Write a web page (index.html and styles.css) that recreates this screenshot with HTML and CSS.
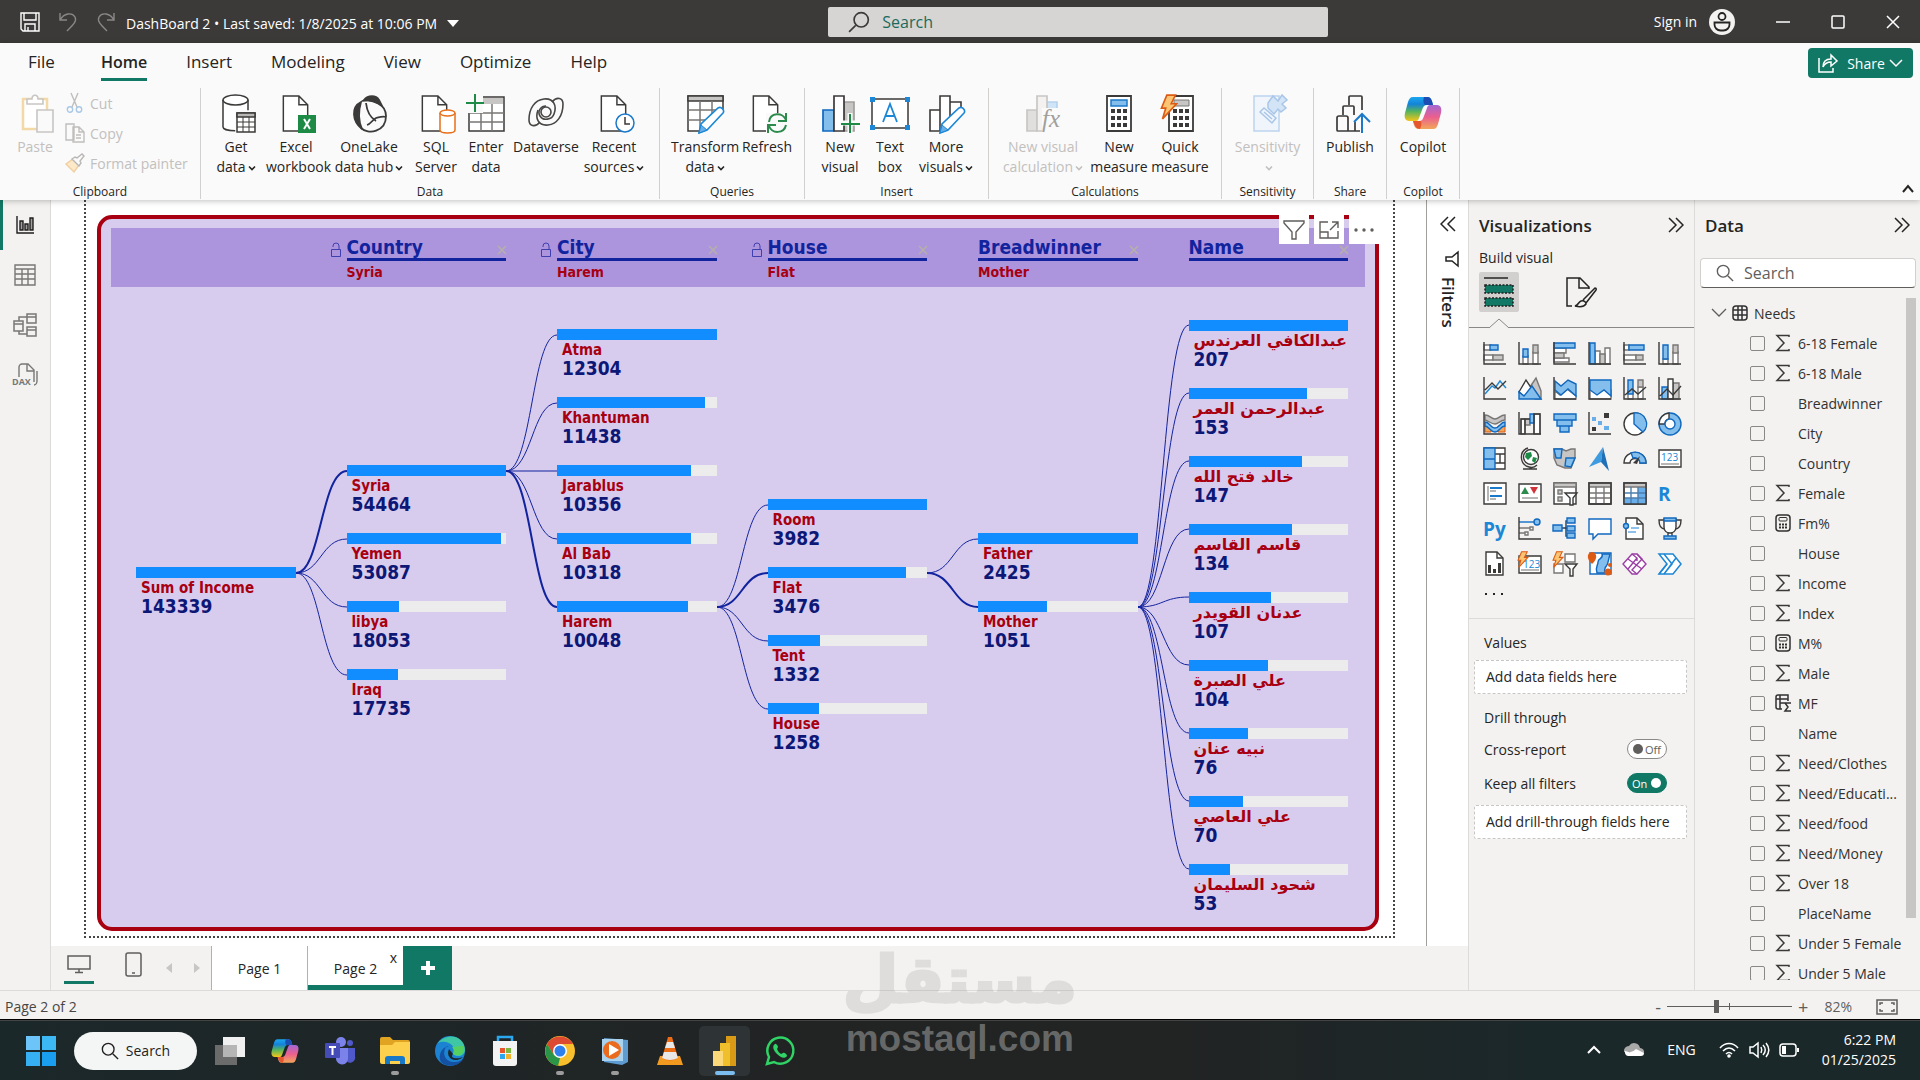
FILE: index.html
```html
<!DOCTYPE html>
<html lang="en">
<head>
<meta charset="UTF-8">
<meta name="viewport" content="width=device-width, initial-scale=1.0">
<title>DashBoard 2</title>
<link rel="stylesheet" href="styles.css">
</head>
<body>

<svg class="sprite" aria-hidden="true">
  <linearGradient id="cp-a" x1="0" y1="0" x2="0" y2="1"><stop offset="0" stop-color="#1aa7f0"/><stop offset=".3" stop-color="#1483d8"/><stop offset=".6" stop-color="#55b45c"/><stop offset="1" stop-color="#f5c518"/></linearGradient>
  <linearGradient id="cp-b" x1="0" y1="0" x2="0" y2="1"><stop offset="0" stop-color="#a267d4"/><stop offset=".5" stop-color="#ea5f8e"/><stop offset="1" stop-color="#f2a65a"/></linearGradient>
  <symbol id="sigma" viewBox="0 0 16 18"><path d="M14 3V1.500H2L9 9L2 16.500H14V15" fill="none" stroke="#3b3a39" stroke-width="1.500"/></symbol>
  <symbol id="calc" viewBox="0 0 16 18"><rect x="1" y="1" width="14" height="16" rx="3" fill="none" stroke="#323130" stroke-width="1.500"/><rect x="4" y="3.500" width="8" height="3.500" rx="1" fill="none" stroke="#323130"/><path d="M4 10.500h2m1 0h2m1 0h2M4 13.500h2m1 0h2m1 0h2" stroke="#323130" stroke-width="2"/></symbol>
  <symbol id="left2" viewBox="0 0 16 16"><path d="M8 1L1 8l7 7M15 1L8 8l7 7" fill="none" stroke="#252423" stroke-width="1.500"/></symbol>
  <symbol id="right2" viewBox="0 0 16 16"><path d="M1 1l7 7l-7 7M8 1l7 7l-7 7" fill="none" stroke="#252423" stroke-width="1.500"/></symbol>
  <symbol id="down" viewBox="0 0 8 8"><path d="M1 2.500l3 3l3-3" fill="none" stroke="currentColor" stroke-width="1.600"/></symbol>
  <symbol id="lens" viewBox="0 0 20 20"><circle cx="8" cy="8" r="6.500" fill="none" stroke="currentColor" stroke-width="1.500"/><path d="M13 13l6 6" stroke="currentColor" stroke-width="1.500"/></symbol>
  <symbol id="lock" viewBox="0 0 12 16"><path d="M1.500 7.500h9v7h-9zM3 5V4a3 3 0 0 1 6 0v3.500" fill="none" stroke="#3f3fae"/></symbol>
  <symbol id="page" viewBox="0 0 28 38"><path d="M1 1h16l9 9v27H1zM17 1v9h9" fill="#fff" stroke="#3b3a39" stroke-width="1.500"/></symbol>
  <symbol id="bolt" viewBox="0 0 16 24"><path d="M6 1h8l-4 8h5L2 23l3-10H1z" fill="#fcc573" stroke="#dc5b14" stroke-width="1.500"/></symbol>
  <symbol id="copilot" viewBox="0 0 38 34"><path d="M9 1h14c4 0 5 3 6 8h-6c-3 0-4 2-5 5l-3 8c-1 3-2 3-4 3H5c-4 0-5-4-4-8L4 6c1-3 2-5 5-5z" fill="url(#cp-a)"/><path d="M29 33H15c-4 0-5-3-6-8h6c3 0 4-2 5-5l3-8c1-3 2-3 4-3h6c4 0 5 4 4 8l-3 11c-1 3-2 5-5 5z" fill="url(#cp-b)"/><path d="M20 1h4c3 0 4 4 5 8h-8c-2-2-2-5-1-8z" fill="#1b4db3"/><path d="M9 25h8c1 3 0 6-1 8c-4 0-5-3-7-8z" fill="#e4572e"/></symbol>
  <symbol id="pencil" viewBox="0 0 28 28"><path d="M1 27l2-9L20 2c3-2 7 2 5 5L9 24z" fill="#fff" stroke="#1c87d6" stroke-width="1.600"/><path d="M1 27l2-8l6 5z" fill="#69aee8" stroke="#1c87d6"/></symbol>
</svg>

<header class="titlebar">
  <div class="quick">
    <button aria-label="Save"><svg width="20" height="20" viewBox="0 0 20 20" fill="none" stroke="#fff" stroke-width="1.400"><path d="M1 1h18v18H3l-2-2zM4 1v7h12V1M5 19v-7h10v7M8 19v-4"/></svg></button>
    <button aria-label="Undo"><svg width="20" height="20" viewBox="0 0 20 20" fill="none" stroke="#8a8886" stroke-width="1.400"><path d="M2 1v7h7M2 8c4-7 12-8 15-3c2 4-1 7-8 14"/></svg></button>
    <button aria-label="Redo"><svg width="20" height="20" viewBox="0 0 20 20" fill="none" stroke="#8a8886" stroke-width="1.400"><path d="M18 1v7h-7M18 8C14 1 6 0 3 5c-2 4 1 7 8 14"/></svg></button>
  </div>
  <button class="file-name">DashBoard 2 • Last saved: 1/8/2025 at 10:06 PM <svg width="12" height="7" viewBox="0 0 12 7"><path d="M0 0h12L6 7z" fill="#fff"/></svg></button>
  <label class="top-search"><svg width="22" height="22" viewBox="0 0 20 20"><g transform="translate(20) scale(-1 1)"><use href="#lens" width="20" height="20"/></g></svg><input type="text" placeholder="Search" aria-label="Search"></label>
  <div class="window">
    <a class="sign-in" href="#">Sign in <svg width="26" height="26" viewBox="0 0 26 26"><circle cx="13" cy="13" r="13" fill="#f3f2f1"/><circle cx="13" cy="7.500" r="3.500" fill="none" stroke="#252423" stroke-width="1.800"/><path d="M5.500 13.500h15v2a6 6 0 0 1-6 6h-3a6 6 0 0 1-6-6z" fill="none" stroke="#252423" stroke-width="1.800"/></svg></a>
    <button aria-label="Minimize"><svg width="14" height="14" viewBox="0 0 14 14"><path d="M0 7h14" stroke="#fff" stroke-width="1.500"/></svg></button>
    <button aria-label="Maximize"><svg width="14" height="14" viewBox="0 0 14 14"><rect x="1" y="1" width="12" height="12" rx="1" fill="none" stroke="#fff" stroke-width="1.500"/></svg></button>
    <button aria-label="Close"><svg width="14" height="14" viewBox="0 0 14 14"><path d="M1 1l12 12M13 1L1 13" stroke="#fff" stroke-width="1.500"/></svg></button>
  </div>
</header>

<section class="ribbon">
  <nav class="tabs">
    <a href="#">File</a>
    <a href="#" class="active">Home</a>
    <a href="#">Insert</a>
    <a href="#">Modeling</a>
    <a href="#">View</a>
    <a href="#">Optimize</a>
    <a href="#">Help</a>
    <button class="share"><svg width="20" height="20" viewBox="0 0 20 20" fill="none" stroke="#fff" stroke-width="1.500"><path d="M1 5v14h14v-4M5 14c0-6 3-8 8-8V2l6 6l-6 5V9c-4 0-6 1-8 5z"/></svg>Share<svg width="14" height="14" viewBox="0 0 14 14"><path d="M1 4l6 6l6-6" fill="none" stroke="#fff" stroke-width="1.500"/></svg></button>
  </nav>
  <div class="groups">
    <div class="group clipboard">
      <div class="tools">
        <button class="tool" disabled><svg width="40" height="40" viewBox="0 0 40 40" fill="#fff" stroke="#c8c6c4" stroke-width="1.600"><path d="M8 5h24v30H8z" stroke="#f3d9a8" stroke-width="2.500"/><path d="M12 10V5h5c0-5 6-5 6 0h5v5z"/><path d="M22 16h16v22H22z" fill="#fafafa"/></svg>Paste</button>
        <div class="small-tools">
          <button disabled><svg width="20" height="20" viewBox="0 0 20 20" fill="none" stroke="#c0bebc" stroke-width="1.400"><path d="M6 0l6 14M13 0L7 14"/><circle cx="5" cy="16.500" r="2.700" stroke="#a9c8e6"/><circle cx="14" cy="16.500" r="2.700" stroke="#a9c8e6"/></svg>Cut</button>
          <button disabled><svg width="20" height="20" viewBox="0 0 20 20" fill="#fafafa" stroke="#c0bebc" stroke-width="1.400"><path d="M1 1h8v16H1zM8 4h6l5 5v10H8zM14 4v5h5M11 12h5M11 15h5"/></svg>Copy</button>
          <button disabled><svg width="20" height="20" viewBox="0 0 20 20" stroke-width="1.400"><path d="M1 11l7-5l6 6l-5 7z" fill="#fde8c8" stroke="#f0cfa0"/><path d="M7 6l7 7l2-3l-1-2l4-5l-2-2l-5 4l-2-1z" fill="#fafafa" stroke="#b9b7b5"/></svg>Format painter</button>
        </div>
      </div>
      <p>Clipboard</p>
    </div>
    <div class="group data">
      <div class="tools">
        <button class="tool"><svg width="40" height="40" viewBox="0 0 40 40" fill="#fff" stroke="#3b3a39" stroke-width="1.500"><path d="M7 6v27c0 5 25 5 25 0V6"/><ellipse cx="19.500" cy="6" rx="12.500" ry="5"/><path d="M20 17h20v22H20z" stroke="#fafafa"/><path d="M21 19h18v19H21z"/><path d="M21 19h18v4H21z" fill="#b9b7b5"/><path d="M21 28h18M21 33h18M27 23v15M33 23v15" stroke-width="1"/></svg>Get<br>data<svg class="dd" width="8" height="8"><use href="#down"/></svg></button>
        <button class="tool"><svg width="40" height="40" viewBox="0 0 40 40"><use href="#page" x="6" y="1" width="28" height="37"/><path d="M22 21h18v18H22z" fill="#1d8a45"/><path d="M28 25l6 10M34 25l-6 10" stroke="#fff" stroke-width="2"/></svg>Excel<br>workbook</button>
        <button class="tool"><svg width="40" height="40" viewBox="0 0 40 40" fill="none" stroke="#3b3a39" stroke-width="1.800"><path d="M15 6c4-5 12-5 15 0l3 6c-5-4-11-6-18-6z" fill="#3b3a39"/><path d="M12 8C2 13 3 27 13 35c-4-9-4-17-1-27z" fill="#3b3a39"/><path d="M13 7c12-3 24 4 24 15c0 16-18 19-25 12M17 9c1 9 5 15 10 18M18 31c4-1 5-5 9-7c4-1 7-2 10-1"/></svg>OneLake<br>data hub<svg class="dd" width="8" height="8"><use href="#down"/></svg></button>
        <button class="tool"><svg width="40" height="40" viewBox="0 0 40 40"><use href="#page" x="5" y="1" width="28" height="37"/><g fill="#fff" stroke="#e8701a" stroke-width="1.500"><path d="M24 19v17c0 4 15 4 15 0V19"/><ellipse cx="31.500" cy="19" rx="7.500" ry="3"/></g></svg>SQL<br>Server</button>
        <button class="tool"><svg width="40" height="40" viewBox="0 0 40 40" fill="#fff" stroke="#3b3a39" stroke-width="1.500"><path d="M3 3h35v34H3z"/><path d="M4 4h33v6H4z" fill="#c8c6c4" stroke="none"/><path d="M3 19h35M3 28h35M15 10v27M26 10v27" stroke="#797775"/><path d="M0 0h17v19H0z" fill="#fafafa" stroke="none"/><path d="M0 9h18M9 0v18" stroke="#1d8a45" stroke-width="2"/></svg>Enter<br>data</button>
        <button class="tool"><svg width="40" height="40" viewBox="0 0 40 40" fill="none" stroke="#484644" stroke-width="1.600"><path id="leaf" d="M14 28C9 34 3 32 3 26C3 14 9 6 18 5C28 4 31 12 28 20C26 26 17 27 14 22C11 17 15 12 20 12"/><path d="M26 8C31 2 37 4 37 10C37 22 31 30 22 31C12 32 9 24 12 16"/><circle cx="20" cy="18" r="5"/></svg>Dataverse</button>
        <button class="tool"><svg width="40" height="40" viewBox="0 0 40 40"><use href="#page" x="6" y="1" width="28" height="37"/><circle cx="31" cy="29" r="9" fill="#fff" stroke="#1c79c9" stroke-width="1.500"/><path d="M31 23v7h5" fill="none" stroke="#3b3a39" stroke-width="1.500"/></svg>Recent<br>sources<svg class="dd" width="8" height="8"><use href="#down"/></svg></button>
      </div>
      <p>Data</p>
    </div>
    <div class="group queries">
      <div class="tools">
        <button class="tool"><svg width="40" height="40" viewBox="0 0 40 40"><g fill="#fff" stroke="#3b3a39" stroke-width="1.500"><path d="M3 2h35v35H3z"/><path d="M3 2h35v5H3z" fill="#c8c6c4"/><path d="M3 16h35M3 26h35M15 7v30M27 7v30" stroke="#797775"/></g><path d="M14 40L40 14v26z" fill="#fafafa"/><use href="#pencil" x="13" y="12" width="28" height="28"/></svg>Transform<br>data<svg class="dd" width="8" height="8"><use href="#down"/></svg></button>
        <button class="tool"><svg width="40" height="40" viewBox="0 0 40 40"><use href="#page" x="5" y="1" width="28" height="37"/><path d="M19 19h21v21H19z" fill="#fafafa"/><path d="M22 28c1-10 14-10 17-2M39 19v8h-8M39 31c-2 9-14 9-17 1M21 39v-8h8" fill="none" stroke="#2b8a4c" stroke-width="2"/></svg>Refresh</button>
      </div>
      <p>Queries</p>
    </div>
    <div class="group insert">
      <div class="tools">
        <button class="tool"><svg width="40" height="40" viewBox="0 0 40 40" stroke-width="1.700"><path d="M3 16h11v21H3z" fill="#83beec" stroke="#1068bf"/><path d="M24 8h10v29H24z" fill="#c8c6c4" stroke="#a19f9d"/><path d="M14 2h10v35H14z" fill="#fff" stroke="#3b3a39"/><path d="M20 29h20M30 19v20" stroke="#fafafa" stroke-width="5"/><path d="M21 30h19M30 20v19" stroke="#1d8a45" stroke-width="2"/></svg>New<br>visual</button>
        <button class="tool"><svg width="40" height="40" viewBox="0 0 40 40"><path d="M2 5h36v29H2z" fill="#fff" stroke="#3b3a39" stroke-width="1.500"/><path d="M0 3h5v5H0zM35 3h5v5h-5zM0 31h5v5H0zM35 31h5v5h-5z" fill="#1c87d6"/><path d="M13 28l7-18l7 18M16 22h8" fill="none" stroke="#1c87d6" stroke-width="1.800"/></svg>Text<br>box</button>
        <button class="tool"><svg width="40" height="40" viewBox="0 0 40 40"><g fill="#fff" stroke="#3b3a39" stroke-width="1.600"><path d="M4 16h10v21H4zM24 8h11v29H24zM14 2h10v35H14z"/></g><path d="M15 38L40 12v28z" fill="#fafafa"/><use href="#pencil" x="13" y="12" width="28" height="28"/></svg>More<br>visuals<svg class="dd" width="8" height="8"><use href="#down"/></svg></button>
      </div>
      <p>Insert</p>
    </div>
    <div class="group calculations">
      <div class="tools">
        <button class="tool" disabled><svg width="40" height="40" viewBox="0 0 40 40" stroke="#c8c6c4" stroke-width="1.700" fill="#f3f2f1"><path d="M4 16h10v21H4z" fill="#e1dfdd"/><path d="M24 8h10v8H24z" fill="#cfe4f7" stroke="#b5d3ee"/><path d="M14 2h10v35H14z"/><path d="M19 14h21v26H19z" fill="#fafafa" stroke="none"/><text x="19" y="33" font-family="Liberation Serif, serif" font-style="italic" font-size="25" fill="#a19f9d" stroke="none">fx</text></svg>New visual<br>calculation<svg class="dd" width="8" height="8"><use href="#down"/></svg></button>
        <button class="tool"><svg width="40" height="40" viewBox="0 0 40 40"><path d="M8 2h24v35H8z" fill="#fff" stroke="#3b3a39" stroke-width="1.800"/><path d="M12 6h16v6H12z" fill="#83beec" stroke="#1c79c9" stroke-width="1.500"/><path d="M12 17h17M12 24h17M12 31h17" stroke="#3b3a39" stroke-width="4" stroke-dasharray="4 2"/></svg>New<br>measure</button>
        <button class="tool"><svg width="40" height="40" viewBox="0 0 40 40"><path d="M9 2h24v35H9z" fill="#fff" stroke="#3b3a39" stroke-width="1.800"/><path d="M14 6h15v6H14z" fill="#c8c6c4" stroke="#797775"/><path d="M13 17h17M13 24h17M13 31h17" stroke="#3b3a39" stroke-width="4" stroke-dasharray="4 2"/><use href="#bolt" x="0" y="0" width="18" height="26"/></svg>Quick<br>measure</button>
      </div>
      <p>Calculations</p>
    </div>
    <div class="group sensitivity">
      <div class="tools">
        <button class="tool" disabled><svg width="40" height="40" viewBox="0 0 40 40" fill="#f0f5fb" stroke="#a9c6e8" stroke-width="1.500"><path d="M6 2h25v35H6z" stroke="#bcd3ee"/><path d="M12 18l4-4l12 10l-4 5zM16 18l8 7"/><path d="M20 9l5-7l5 5l4-6l5 5l-5 4l4 4l-5 4l-3-3l-4 5l-6-6z" fill="#d3e4f6"/></svg>Sensitivity<br><svg class="dd" width="8" height="8"><use href="#down"/></svg></button>
      </div>
      <p>Sensitivity</p>
    </div>
    <div class="group publish">
      <div class="tools">
        <button class="tool"><svg width="40" height="40" viewBox="0 0 40 40" fill="none" stroke="#3b3a39" stroke-width="1.700"><path d="M30 37H8a1 1 0 0 1-1-1V24a2 2 0 0 1 2-2h7a2 2 0 0 1 2 2v13M13 21v-8a1 1 0 0 1 1-1h9a1 1 0 0 1 1 1v8M19 11V3a1 1 0 0 1 1-1h11a1 1 0 0 1 1 1v13M25 28v9"/><path d="M32 39V21M24 28l8-8l8 8" stroke="#1c79c9" stroke-width="2"/></svg>Publish</button>
      </div>
      <p>Share</p>
    </div>
    <div class="group copilot">
      <div class="tools">
        <button class="tool"><svg width="40" height="40" viewBox="0 0 40 40"><use href="#copilot" x="1" y="2" width="38" height="34"/></svg>Copilot</button>
      </div>
      <p>Copilot</p>
    </div>
    <button class="collapse" aria-label="Collapse ribbon"><svg width="12" height="10" viewBox="0 0 12 10"><path d="M1 8l5-6l5 6" fill="none" stroke="#252423" stroke-width="2"/></svg></button>
  </div>
</section>

<main class="workspace">
  <nav class="rail">
    <button class="active" aria-label="Report view"><svg width="20" height="20" viewBox="0 0 20 20" fill="#a19f9d" stroke="#201f1e" stroke-width="1.400"><path d="M2 1v17h17" fill="none"/><path d="M5 6h3v9H5zM10 9h3v6h-3zM15 3h3v12h-3z"/></svg></button>
    <button aria-label="Table view"><svg width="22" height="22" viewBox="0 0 22 22" fill="none" stroke="#797775" stroke-width="1.400"><path d="M1 1h20v20H1zM1 5h20M1 10h20M1 15h20M8 5v16M14 5v16"/></svg></button>
    <button aria-label="Model view"><svg width="24" height="24" viewBox="0 0 24 24" fill="none" stroke="#797775" stroke-width="1.500"><path d="M1 8h9v10H1zM1 11h9M14 1h9v9h-9zM14 4h9M14 14h9v9h-9zM14 17h9M6 8V4h8M6 18v3h8"/></svg></button>
    <button aria-label="DAX query view"><svg width="26" height="24" viewBox="0 0 26 24" fill="none" stroke="#797775" stroke-width="1.400"><path d="M7 14V4a3 3 0 0 1 3-3h6l6 6v12M15 1v7h7M25 8v10c0 3-2 4-3 4"/><text x="0" y="22" font-family="Open Sans, sans-serif" font-weight="700" font-size="9" fill="#797775" stroke="none">DAX</text></svg></button>
  </nav>

  <section class="center">
    <div class="stage">
      <div class="canvas">
        <div class="sheet">
          <article class="visual">
            <div class="visual-tools">
              <button aria-label="Filters"><svg width="22" height="20" viewBox="0 0 22 20"><path d="M1 1h20v2l-8 9v7H9v-7L1 3z" fill="none" stroke="#605e5c" stroke-width="1.400"/></svg></button>
              <button aria-label="Focus mode"><svg width="20" height="18" viewBox="0 0 20 18" fill="none" stroke="#605e5c" stroke-width="1.400"><path d="M9 1H1v16h18v-7M1 11h8v6M13 1h6v6M19 1l-8 8"/></svg></button>
              <button aria-label="More options"><svg width="20" height="4" viewBox="0 0 20 4" fill="#605e5c"><circle cx="2" cy="2" r="1.700"/><circle cx="10" cy="2" r="1.700"/><circle cx="18" cy="2" r="1.700"/></svg></button>
            </div>
            <div class="levels-head">
              <div></div>
              <div class="head"><svg class="lock" width="12" height="16"><use href="#lock"/></svg><h3>Country</h3><button aria-label="Remove Country"><svg width="8" height="8" viewBox="0 0 8 8"><path d="M0 0l8 8M8 0L0 8"/></svg></button><p>Syria</p></div>
              <div class="head"><svg class="lock" width="12" height="16"><use href="#lock"/></svg><h3>City</h3><button aria-label="Remove City"><svg width="8" height="8" viewBox="0 0 8 8"><path d="M0 0l8 8M8 0L0 8"/></svg></button><p>Harem</p></div>
              <div class="head"><svg class="lock" width="12" height="16"><use href="#lock"/></svg><h3>House</h3><button aria-label="Remove House"><svg width="8" height="8" viewBox="0 0 8 8"><path d="M0 0l8 8M8 0L0 8"/></svg></button><p>Flat</p></div>
              <div class="head"><h3>Breadwinner</h3><button aria-label="Remove Breadwinner"><svg width="8" height="8" viewBox="0 0 8 8"><path d="M0 0l8 8M8 0L0 8"/></svg></button><p>Mother</p></div>
              <div class="head"><h3>Name</h3><button aria-label="Remove Name"><svg width="8" height="8" viewBox="0 0 8 8"><path d="M0 0l8 8M8 0L0 8"/></svg></button></div>
            </div>
            <div class="tree">
              <svg class="links" viewBox="0 0 1212 636" preserveAspectRatio="none">
                <path class="on" d="M160 286C185 286 185 184 211 184"/>
                <path d="M160 286C185 286 185 252 211 252M160 286C185 286 185 320 211 320M160 286C185 286 185 388 211 388"/>
                <path class="on" d="M370 184C396 184 396 320 421 320"/>
                <path d="M370 184H421M370 184C396 184 396 48 421 48M370 184C396 184 396 116 421 116M370 184C396 184 396 252 421 252"/>
                <path class="on" d="M581 320C606 320 606 286 632 286"/>
                <path d="M581 320C606 320 606 218 632 218M581 320C606 320 606 354 632 354M581 320C606 320 606 422 632 422"/>
                <path class="on" d="M791 286C817 286 817 320 842 320"/>
                <path d="M791 286C817 286 817 252 842 252"/>
                <path d="M1002 320C1027 320 1027 38 1053 38M1002 320C1027 320 1027 106 1053 106M1002 320C1027 320 1027 174 1053 174M1002 320C1027 320 1027 242 1053 242M1002 320C1027 320 1027 310 1053 310M1002 320C1027 320 1027 378 1053 378M1002 320C1027 320 1027 446 1053 446M1002 320C1027 320 1027 514 1053 514M1002 320C1027 320 1027 582 1053 582"/>
              </svg>
              <ul class="level root">
                <li><i class="bar"><b style="width:100%"></b></i><span>Sum of Income</span><strong>143339</strong></li>
              </ul>
              <ul class="level country">
                <li><i class="bar"><b style="width:100%"></b></i><span>Syria</span><strong>54464</strong></li>
                <li><i class="bar"><b style="width:97%"></b></i><span>Yemen</span><strong>53087</strong></li>
                <li><i class="bar"><b style="width:33%"></b></i><span>libya</span><strong>18053</strong></li>
                <li><i class="bar"><b style="width:32%"></b></i><span>Iraq</span><strong>17735</strong></li>
              </ul>
              <ul class="level city">
                <li><i class="bar"><b style="width:100%"></b></i><span>Atma</span><strong>12304</strong></li>
                <li><i class="bar"><b style="width:93%"></b></i><span>Khantuman</span><strong>11438</strong></li>
                <li><i class="bar"><b style="width:84%"></b></i><span>Jarablus</span><strong>10356</strong></li>
                <li><i class="bar"><b style="width:84%"></b></i><span>Al Bab</span><strong>10318</strong></li>
                <li><i class="bar"><b style="width:82%"></b></i><span>Harem</span><strong>10048</strong></li>
              </ul>
              <ul class="level house">
                <li><i class="bar"><b style="width:100%"></b></i><span>Room</span><strong>3982</strong></li>
                <li><i class="bar"><b style="width:87%"></b></i><span>Flat</span><strong>3476</strong></li>
                <li><i class="bar"><b style="width:33%"></b></i><span>Tent</span><strong>1332</strong></li>
                <li><i class="bar"><b style="width:32%"></b></i><span>House</span><strong>1258</strong></li>
              </ul>
              <ul class="level breadwinner">
                <li><i class="bar"><b style="width:100%"></b></i><span>Father</span><strong>2425</strong></li>
                <li><i class="bar"><b style="width:43%"></b></i><span>Mother</span><strong>1051</strong></li>
              </ul>
              <ul class="level name">
                <li><i class="bar"><b style="width:100%"></b></i><span lang="ar">عبدالكافي العرندس</span><strong>207</strong></li>
                <li><i class="bar"><b style="width:74%"></b></i><span lang="ar">عبدالرحمن العمر</span><strong>153</strong></li>
                <li><i class="bar"><b style="width:71%"></b></i><span lang="ar">خالد فتح الله</span><strong>147</strong></li>
                <li><i class="bar"><b style="width:65%"></b></i><span lang="ar">قاسم القاسم</span><strong>134</strong></li>
                <li><i class="bar"><b style="width:52%"></b></i><span lang="ar">عدنان القويدر</span><strong>107</strong></li>
                <li><i class="bar"><b style="width:50%"></b></i><span lang="ar">علي الصبرة</span><strong>104</strong></li>
                <li><i class="bar"><b style="width:37%"></b></i><span lang="ar">نبيه عنان</span><strong>76</strong></li>
                <li><i class="bar"><b style="width:34%"></b></i><span lang="ar">علي العاصي</span><strong>70</strong></li>
                <li><i class="bar"><b style="width:26%"></b></i><span lang="ar">شحود السليمان</span><strong>53</strong></li>
              </ul>
            </div>
          </article>
        </div>
      </div>
      <aside class="filters">
        <button aria-label="Expand filters"><svg width="16" height="16"><use href="#left2"/></svg></button>
        <svg width="14" height="16" viewBox="0 0 14 16"><path d="M13 1v14L7 10H1V6h6z" fill="none" stroke="#252423" stroke-width="1.500"/></svg>
        <h2>Filters</h2>
      </aside>
    </div>
    <div class="pages">
      <button class="layout active" aria-label="Desktop layout"><svg width="26" height="20" viewBox="0 0 26 20" fill="none" stroke="#605e5c" stroke-width="1.500"><path d="M2 2h22v13H2zM13 15v3M9 18.500h8"/></svg></button>
      <button class="layout" aria-label="Mobile layout"><svg width="18" height="26" viewBox="0 0 18 26" fill="none" stroke="#605e5c" stroke-width="1.500"><rect x="1" y="1" width="15" height="23" rx="2"/><path d="M7 21h3"/></svg></button>
      <button class="step" aria-label="Previous page"><svg width="6" height="10" viewBox="0 0 6 10"><path d="M6 0v10L0 5z" fill="#c8c6c4"/></svg></button>
      <button class="step" aria-label="Next page"><svg width="6" height="10" viewBox="0 0 6 10"><path d="M0 0v10l6-5z" fill="#c8c6c4"/></svg></button>
      <button class="page-tab">Page 1</button>
      <button class="page-tab active">Page 2<span>x</span></button>
      <button class="add-page" aria-label="New page"><svg width="14" height="14" viewBox="0 0 14 14"><path d="M7 0v14M0 7h14" stroke="#fff" stroke-width="4"/></svg></button>
    </div>
  </section>

  <aside class="pane visualizations">
    <header><h2>Visualizations</h2><button aria-label="Collapse"><svg width="16" height="16"><use href="#right2"/></svg></button></header>
    <h3>Build visual</h3>
    <div class="modes">
      <button class="active" aria-label="Build"><svg width="32" height="32" viewBox="0 0 32 32"><path d="M1 2h24" stroke="#252423" stroke-width="1.500"/><path d="M2 9h28v8H2zM2 22h28v8H2z" fill="#117865" stroke="#201f1e" stroke-width="1.500" stroke-dasharray="2 1.500"/></svg></button>
      <button aria-label="Format"><svg width="32" height="32" viewBox="0 0 32 32" fill="none" stroke="#252423" stroke-width="1.500"><path d="M6 30H1V2h13l9 9v2M13 2v10h10M15 25c3-1 5 1 5 3c-2 3-7 3-11 2c4-1 3-4 6-5zM17 24l12-12c2 0 1 2 1 2L20 27"/></svg></button>
    </div>
    <svg class="pointer" viewBox="0 0 20 10" width="20" height="10"><path d="M0 10L10 1l10 9" fill="#f3f2f1" stroke="#8a8886"/></svg>
    <div class="gallery">
      <button aria-label="Stacked bar chart"><svg viewBox="0 0 24 24"><path class="w" d="M1 3h7v5H1zM1 13h9v5H1z"/><path class="b" d="M7 3h8v5H7z"/><path class="g" d="M10 13h10v5H10z"/><path class="k" d="M1 0v22h22"/></svg></button>
      <button aria-label="Stacked column chart"><svg viewBox="0 0 24 24"><path class="w" d="M5 14h5v8H5zM15 10h5v12h-5z"/><path class="b" d="M5 7h5v8H5z"/><path class="g" d="M15 3h5v8h-5z"/><path class="k" d="M1 0v22h22"/></svg></button>
      <button aria-label="Clustered bar chart"><svg viewBox="0 0 24 24"><path class="w" d="M1 6h12v5H1zM1 16h15v4H1z"/><path class="g" d="M1 11h10v5H1z"/><path class="b" d="M1 1h21v5H1z"/><path class="k" d="M1 0v22h22"/></svg></button>
      <button aria-label="Clustered column chart"><svg viewBox="0 0 24 24"><path class="w" d="M7 9h5v13H7zM17 6h5v16h-5z"/><path class="g" d="M12 12h5v10h-5z"/><path class="b" d="M2 1h5v21H2z"/><path class="k" d="M1 0v22h22"/></svg></button>
      <button aria-label="100% stacked bar chart"><svg viewBox="0 0 24 24"><path class="w" d="M1 3h5v5H1zM1 13h12v5H1z"/><path class="b" d="M6 3h15v5H6z"/><path class="g" d="M13 13h7v5h-7z"/><path class="k" d="M1 0v22h22"/></svg></button>
      <button aria-label="100% stacked column chart"><svg viewBox="0 0 24 24"><path class="w" d="M5 17h5v5H5zM15 10h5v12h-5z"/><path class="b" d="M5 3h5v14H5z"/><path class="g" d="M15 3h5v8h-5z"/><path class="k" d="M1 0v22h22"/></svg></button>
      <button aria-label="Line chart"><svg viewBox="0 0 24 24"><path d="M2 17L9 9l3 2l5-7l6 7" fill="none" stroke="#1c87d6" stroke-width="1.400"/><path class="k" d="M1 0v22h22M2 13l7-7l6 6l8-8"/></svg></button>
      <button aria-label="Area chart"><svg viewBox="0 0 24 24"><path class="g" d="M12 10l6-9l5 13v8h-6z"/><path class="w dark" d="M1 15L8 3l8 12l-8 6z"/><path class="b" d="M1 22v-7l5 4l8-10l9 13z"/></svg></button>
      <button aria-label="Stacked area chart"><svg viewBox="0 0 24 24"><path class="w" d="M2 14l5 4l7-6l9 7v3H2z"/><path class="b" d="M2 4l6 5l7-6l8 4v12l-8-7l-7 6l-6-5z"/><path class="k" d="M1 0v22h22"/></svg></button>
      <button aria-label="100% stacked area chart"><svg viewBox="0 0 24 24"><path class="w" d="M2 13h21v9H2z"/><path class="b" d="M2 3h21v16l-7-6l-7 5l-7-5z"/><path class="k" d="M1 0v22h22"/></svg></button>
      <button aria-label="Line and stacked column chart"><svg viewBox="0 0 24 24"><path class="w" d="M5 14h5v8H5zM15 10h5v12h-5z"/><path class="b" d="M5 3h5v14H5z"/><path class="g" d="M15 3h5v7h-5z"/><path class="k" d="M1 0v22h22M2 18l7-6l6 5l8-7"/></svg></button>
      <button aria-label="Line and clustered column chart"><svg viewBox="0 0 24 24"><path class="b" d="M4 10h6v12H4z"/><path class="g" d="M15 6h6v16h-6z"/><path class="w dark" d="M10 2h5v20h-5z"/><path class="k" d="M1 0v22h22M2 19l7-7l6 6l8-9"/></svg></button>
      <button aria-label="Ribbon chart"><svg viewBox="0 0 24 24"><path d="M2 14h6v6H2zM15 14h7v6h-7z" fill="#f2a65a" stroke="#dc5b14"/><path class="g" d="M2 3c5 0 6 4 10 4s5-4 10-4v5c-5 0-6 4-10 4S6 9 2 8z"/><path class="b" d="M2 10c5 0 5 6 10 6s5-6 10-6v4c-5 0-5 6-10 6s-6-6-10-6z"/><path class="k" d="M1 0v22h22"/></svg></button>
      <button aria-label="Waterfall chart"><svg viewBox="0 0 24 24"><path class="w" d="M3 7h4v15H3zM16 2h6v20h-6z"/><path class="g" d="M7 7h5v6H7z"/><path class="b" d="M12 2h4v9h-4z"/><path class="k" d="M1 0v22h22M3 22V7h9M16 22V2h6v20M7 7v15"/></svg></button>
      <button aria-label="Funnel chart"><svg viewBox="0 0 24 24"><path class="b" d="M1 2h22v6H1zM4 8h15v6H4zM7 14h9v6H7z"/></svg></button>
      <button aria-label="Scatter chart"><svg viewBox="0 0 24 24"><path d="M16 1h5v5h-5zM4 15h4v4H4z" fill="#3b3a39"/><path d="M4 5h4v4H4zM10 9h4v4h-4zM16 14h5v4h-5z" fill="#69aee8"/><path class="k" d="M1 0v22h22"/></svg></button>
      <button aria-label="Pie chart"><svg viewBox="0 0 24 24"><circle class="w dark" cx="12" cy="12" r="11"/><path class="b" d="M11 1v11l9 8A11 11 0 0 0 11 1z"/></svg></button>
      <button aria-label="Donut chart"><svg viewBox="0 0 24 24"><circle class="b" cx="12" cy="12" r="11"/><path class="w dark" d="M11 1v6a5 5 0 0 0-4 5H1A11 11 0 0 1 11 1z"/><circle class="b hole" cx="12" cy="12" r="5"/></svg></button>
      <button aria-label="Treemap"><svg viewBox="0 0 24 24"><path class="w dark" d="M1 1h21v21H1zM12 7h10M12 16h10M17 7v9"/><path class="b" d="M1 1h11v11H1zM1 12h11v10H1z"/></svg></button>
      <button aria-label="Map"><svg viewBox="0 0 24 24"><circle class="w dark" cx="13" cy="10" r="7.500"/><path d="M8 6l5-1l1 4l-4 4l-3-3zM15 10l4 1l-2 5l-3-2z" fill="#1d8a45"/><path class="k" d="M10 1C1 4 1 17 11 20c3 1 6 0 8-2M12 20v2M5 22h14"/></svg></button>
      <button aria-label="Filled map"><svg viewBox="0 0 24 24"><path class="g" d="M1 2h8l4 2l5-2h4v9l-4 10h-6L4 18L1 11z"/><path class="b" d="M1 2h8l-1 9H3zM13 11h9l-4 9l-6-1z"/></svg></button>
      <button aria-label="Azure map"><svg viewBox="0 0 24 24"><path d="M15 0L1 20l12-5z" fill="#3f9be0"/><path d="M15 0l6 24l-8-9z" fill="#1f6fb8"/></svg></button>
      <button aria-label="Gauge"><svg viewBox="0 0 24 24"><path class="w dark" d="M1 16C1 2 23 2 23 16h-6c0-6-10-6-10 0z"/><path class="b" d="M8 6c8-3 15 3 15 10h-6c0-4-4-6-7-5z"/><path d="M10 16l7-7l-3 8z" fill="#3b3a39"/></svg></button>
      <button aria-label="Card"><svg viewBox="0 0 24 24"><path class="w dark" d="M1 3h22v17H1z"/><path d="M3 17h18" stroke="#a19f9d" stroke-width="1.500"/><text x="3" y="14">123</text></svg></button>
      <button aria-label="Multi-row card"><svg viewBox="0 0 24 24"><path class="w dark" d="M1 1h22v21H1z"/><path d="M5 4v15M7 9h6M7 17h6" stroke="#a19f9d" stroke-width="1.500"/><path d="M7 6h12M7 14h12" stroke="#1c79c9" stroke-width="2"/></svg></button>
      <button aria-label="KPI"><svg viewBox="0 0 24 24"><path class="w dark" d="M1 2h22v18H1z"/><path d="M3 12l4-7l4 7z" fill="#2b8a4c"/><path d="M12 5h8l-4 7z" fill="#d13438"/><path d="M4 16h16" stroke="#a19f9d" stroke-width="1.500"/></svg></button>
      <button aria-label="Slicer"><svg viewBox="0 0 24 24"><path class="w dark" d="M1 1h22v21H1z"/><path class="g" d="M1 1h22v4H1zM5 8h4v4H5zM5 15h4v4H5z"/><path class="w dark" d="M12 11h12l-4 5v7h-3v-7z"/></svg></button>
      <button aria-label="Table"><svg viewBox="0 0 24 24"><path class="w dark" d="M1 1h22v21H1z"/><path class="g" d="M1 1h22v4H1z"/><path d="M1 11h22M1 16h22M8 5v17M16 5v17" stroke="#797775" stroke-width="1.400"/><path class="k" d="M1 1h22v21H1z"/></svg></button>
      <button aria-label="Matrix"><svg viewBox="0 0 24 24"><path class="w dark" d="M1 1h22v21H1z"/><path d="M15 5h8v17H1v-6h14z" fill="#69aee8"/><path class="g" d="M1 1h22v4H1z"/><path d="M1 11h22M1 16h22M8 5v17M15 5v17" stroke="#4b7fae" stroke-width="1.400"/><path class="k" d="M1 1h22v21H1z"/></svg></button>
      <button class="letter">R</button>
      <button class="letter">Py</button>
      <button aria-label="Key influencers"><svg viewBox="0 0 24 24"><path d="M1 5h17" stroke="#1c79c9" stroke-width="1.500"/><path d="M1 11h11M1 16h7" stroke="#797775" stroke-width="1.500"/><circle class="b" cx="19" cy="5" r="3"/><path class="w" d="M12 10h3v3h-3zM7 15h3v3H7z"/><path class="k" d="M1 0v22h22"/></svg></button>
      <button aria-label="Decomposition tree"><svg viewBox="0 0 24 24"><path class="k" d="M9 11h6M16 4h-3v15h3"/><path class="b" d="M0 8h9v6H0zM14 1h8v5h-8zM14 9h8v5h-8zM14 16h8v5h-8z"/></svg></button>
      <button aria-label="Q&amp;A"><svg viewBox="0 0 24 24"><path class="w blue" d="M1 2h22v15H10l-5 5v-5H1z"/></svg></button>
      <button aria-label="Smart narrative"><svg viewBox="0 0 24 24"><path class="w dark" d="M3 1h11l6 6v15H3z"/><path class="k" d="M14 1v6h6"/><circle class="b" cx="3" cy="9" r="2.500"/><path d="M8 11h8M5 15h8" stroke="#69aee8" stroke-width="1.500"/></svg></button>
      <button aria-label="Metrics"><svg viewBox="0 0 24 24"><path class="k" d="M6 3H1c0 7 3 9 6 9M18 3h5c0 7-3 9-6 9"/><path class="w dark" d="M6 2h12v8c0 8-12 8-12 0zM10 16h4v4h-4z"/><path class="b" d="M6 1h12v3H6zM6 19h12v3H6z"/></svg></button>
      <button aria-label="Paginated report"><svg viewBox="0 0 24 24"><path class="w dark" d="M3 0h11l6 6v17H3z"/><path class="k" d="M14 0v6h6"/><path d="M5 13h3v8H5zM10 17h3v4h-3zM15 11h3v10h-3z" fill="#3b3a39"/></svg></button>
      <button aria-label="Card (new)"><svg viewBox="0 0 24 24"><path class="w dark" d="M1 4h22v17H1z"/><path d="M3 18h18" stroke="#a19f9d" stroke-width="1.500"/><text x="5" y="16">123</text><use href="#bolt" x="-1" y="-1" width="12" height="17"/></svg></button>
      <button aria-label="Slicer (new)"><svg viewBox="0 0 24 24"><path class="w" d="M1 12h9v9H1zM12 2h10v8H12z"/><path class="w dark" d="M12 12h12l-4 5v7h-3v-7z"/><use href="#bolt" x="-1" y="-1" width="12" height="17"/></svg></button>
      <button aria-label="ArcGIS map"><svg viewBox="0 0 24 24"><path class="w blue" d="M2 1h21v21H2z"/><path class="b" d="M22 2h-8c2 5-4 4-4 8s-3 4-1 11h8c-2-7 3-6 3-11z"/><path d="M4 12C-3 6 0 0 4 0s7 6 0 12z" fill="#dc5b14"/><circle cx="20" cy="20" r="3.500" fill="#dc5b14"/><circle cx="22" cy="13" r="2" fill="#dc5b14"/></svg></button>
      <button aria-label="Power Apps"><svg viewBox="0 0 24 24" fill="#fff" stroke="#9b3fa5" stroke-width="1.400"><path d="M9 2h5l9 10l-9 10H9L0 12z"/><path d="M9 2l5 4l-9 11M14 2l5 5l-10 11l5 4M5 7l14 10M14 6v3" fill="none"/></svg></button>
      <button aria-label="Power Automate"><svg viewBox="0 0 24 24" fill="#fff" stroke="#1c87d6" stroke-width="1.500"><path d="M1 2h14l8 10l-8 10H1l8-10z"/><path d="M6 2l8 10l-8 10M9 12L1 22M18 6L6 22" fill="none"/></svg></button>
    </div>
    <button class="more-visuals" aria-label="Get more visuals"><svg width="20" height="4" viewBox="0 0 20 4" fill="#252423"><path d="M1 1h2v2H1zM9 1h2v2H9zM17 1h2v2h-2z"/></svg></button>
    <section class="wells">
      <h4>Values</h4>
      <div class="well">Add data fields here</div>
      <h4 class="drill">Drill through</h4>
      <label class="option">Cross-report <span class="switch"><input type="checkbox"><em>Off</em></span></label>
      <label class="option">Keep all filters <span class="switch"><input type="checkbox" checked><em>On</em></span></label>
      <div class="well">Add drill-through fields here</div>
    </section>
  </aside>

  <aside class="pane fields">
    <header><h2>Data</h2><button aria-label="Collapse"><svg width="16" height="16"><use href="#right2"/></svg></button></header>
    <label class="field-search"><svg width="18" height="18"><use href="#lens"/></svg><input type="text" placeholder="Search" aria-label="Search fields"></label>
    <div class="field-list">
      <button class="table-name"><svg width="14" height="8" viewBox="0 0 14 8"><path d="M0 0l7 7l7-7" fill="none" stroke="#605e5c" stroke-width="1.300"/></svg><svg width="16" height="16" viewBox="0 0 16 16" fill="none" stroke="#323130" stroke-width="1.500"><rect x="1" y="1" width="14" height="14" rx="3"/><path d="M1 5h14M1 10h14M6 1v14M10 1v14"/></svg>Needs</button>
      <label><input type="checkbox"><svg><use href="#sigma"/></svg>6-18 Female</label>
      <label><input type="checkbox"><svg><use href="#sigma"/></svg>6-18 Male</label>
      <label><input type="checkbox"><svg></svg>Breadwinner</label>
      <label><input type="checkbox"><svg></svg>City</label>
      <label><input type="checkbox"><svg></svg>Country</label>
      <label><input type="checkbox"><svg><use href="#sigma"/></svg>Female</label>
      <label><input type="checkbox"><svg><use href="#calc"/></svg>Fm%</label>
      <label><input type="checkbox"><svg></svg>House</label>
      <label><input type="checkbox"><svg><use href="#sigma"/></svg>Income</label>
      <label><input type="checkbox"><svg><use href="#sigma"/></svg>Index</label>
      <label><input type="checkbox"><svg><use href="#calc"/></svg>M%</label>
      <label><input type="checkbox"><svg><use href="#sigma"/></svg>Male</label>
      <label><input type="checkbox"><svg viewBox="0 0 16 18" fill="none" stroke="#323130" stroke-width="1.500"><path d="M7 15H3a2 2 0 0 1-2-2V3a2 2 0 0 1 2-2h10v6M1 5h12M5 1v14M5 9h5M16 9h-6l3 4l-3 4h6"/></svg>MF</label>
      <label><input type="checkbox"><svg></svg>Name</label>
      <label><input type="checkbox"><svg><use href="#sigma"/></svg>Need/Clothes</label>
      <label><input type="checkbox"><svg><use href="#sigma"/></svg>Need/Educati...</label>
      <label><input type="checkbox"><svg><use href="#sigma"/></svg>Need/food</label>
      <label><input type="checkbox"><svg><use href="#sigma"/></svg>Need/Money</label>
      <label><input type="checkbox"><svg><use href="#sigma"/></svg>Over 18</label>
      <label><input type="checkbox"><svg></svg>PlaceName</label>
      <label><input type="checkbox"><svg><use href="#sigma"/></svg>Under 5 Female</label>
      <label><input type="checkbox"><svg><use href="#sigma"/></svg>Under 5 Male</label>
      <div class="scrollbar"></div>
    </div>
  </aside>
</main>

<footer class="statusbar">
  <span>Page 2 of 2</span>
  <div class="zoom">
    <button aria-label="Zoom out">-</button>
    <input type="range" min="0" max="100" value="39" aria-label="Zoom">
    <button aria-label="Zoom in">+</button>
    <span>82%</span>
    <button aria-label="Fit to page"><svg width="22" height="16" viewBox="0 0 22 16" fill="none" stroke="#605e5c" stroke-width="1.500"><path d="M1 1h20v14H1zM4 6V4h3M15 4h3v2M18 10v2h-3M7 12H4v-2"/></svg></button>
  </div>
</footer>

<div class="taskbar">
  <div class="apps">
    <button aria-label="Start"><svg width="30" height="30" viewBox="0 0 30 30"><path d="M0 0h14v14H0z" fill="#6cc4f8"/><path d="M16 0h14v14H16z" fill="#3cb8f4"/><path d="M0 16h14v14H0z" fill="#36b0f2"/><path d="M16 16h14v14H16z" fill="#1a9ff0"/></svg></button>
    <button class="task-search"><svg width="18" height="18"><use href="#lens"/></svg>Search</button>
    <button aria-label="Task view"><svg width="30" height="28" viewBox="0 0 30 28"><path d="M0 8h22v20H0z" fill="#6b6b6b"/><path d="M8 0h22v20H8z" fill="#f0f0f0"/><path d="M8 8h14v12H8z" fill="#b5b5b5"/></svg></button>
    <button aria-label="Copilot"><svg width="28" height="26"><use href="#copilot"/></svg></button>
    <button aria-label="Teams"><svg width="30" height="28" viewBox="0 0 30 28"><circle cx="16" cy="5" r="5" fill="#7b83eb"/><circle cx="25" cy="6" r="3" fill="#5059c9"/><path d="M20 11h10v8a5 5 0 0 1-10 3z" fill="#5059c9"/><path d="M11 11h12v10a6 6 0 0 1-12 1z" fill="#7b83eb"/><rect y="6" width="15" height="15" rx="1" fill="#454cb5"/><path d="M4 10h7M7.500 10v8" stroke="#fff" stroke-width="2"/></svg></button>
    <button class="running" aria-label="File Explorer"><svg width="30" height="28" viewBox="0 0 30 28"><path d="M0 2q0-2 2-2h8l3 3h15q2 0 2 2v8H0z" fill="#e0a422"/><path d="M0 8h12l3-3h15v20q0 2-2 2H2q-2 0-2-2z" fill="#fccf4d"/><path d="M5 27v-5q0-3 3-3h14q3 0 3 3v5h-5v-3H10v3z" fill="#1778c8"/></svg></button>
    <button aria-label="Edge"><svg width="30" height="30" viewBox="0 0 30 30"><circle cx="15" cy="15" r="15" fill="#1b83d2"/><path d="M3 7c8-11 27-8 27 7c0 6-8 8-12 4c5-9-8-15-15-11z" fill="#3fc6a5"/><path d="M28 10c4 8-5 11-10 8c1-3 1-5-1-7z" fill="#55d060"/><path d="M12 10c-6 6-2 17 8 16c4 0 7-2 9-4c-5 9-17 10-23 4c-4-7 2-17 8-15z" fill="#1551a3"/><path d="M18 18c-4 5 5 5 10 3c-8 7-18 1-14-8z" fill="#1b282a"/></svg></button>
    <button aria-label="Store"><svg width="30" height="30" viewBox="0 0 30 30"><path d="M8 6V1h14v5" fill="none" stroke="#2aa7ef" stroke-width="2.500"/><path d="M3 5h24v22a3 3 0 0 1-3 3H6a3 3 0 0 1-3-3z" fill="#f3f3f3"/><path d="M10 12h5v5h-5z" fill="#e8552d"/><path d="M16 12h5v5h-5z" fill="#7cb83e"/><path d="M10 18h5v5h-5z" fill="#2aa7ef"/><path d="M16 18h5v5h-5z" fill="#f2b32a"/></svg></button>
    <button class="running" aria-label="Chrome"><svg width="30" height="30" viewBox="0 0 30 30"><circle cx="15" cy="15" r="15" fill="#f9be2c"/><path d="M2 8a15 15 0 0 1 26 0H15l-6 11z" fill="#dd4a32"/><path d="M2 8l7 11l6 3l-2 8A15 15 0 0 1 2 8z" fill="#2a9447"/><circle cx="15" cy="15" r="7" fill="#fff"/><circle cx="15" cy="15" r="5.500" fill="#2f80ed"/></svg></button>
    <button class="running" aria-label="Media player"><svg width="26" height="28" viewBox="0 0 26 28"><path d="M2 1l24 2v22l-6 3L2 25z" fill="#5d9bd0"/><path d="M0 2h21v22H0z" fill="#a9d2ee"/><circle cx="10" cy="13" r="9" fill="#ea6b1e"/><path d="M7 7l10 6l-10 6z" fill="#fff"/></svg></button>
    <button aria-label="VLC"><svg width="26" height="28" viewBox="0 0 26 28"><path d="M3 19h20l3 9H0z" fill="#f29a20"/><path d="M11 0h4l6 21q-8 5-16 0z" fill="#ee6c14"/><path d="M10 5h6l2 6H8zM7 15h12l2 6q-8 4-16 0z" fill="#e8e8e8"/></svg></button>
    <button class="running current" aria-label="Power BI"><svg width="24" height="30" viewBox="0 0 24 30"><path d="M13 0h10v30H13z" fill="#d99b16"/><path d="M7 7h10v23H7z" fill="#f0bf2c"/><path d="M0 15h10v15H0z" fill="#fbd97a"/></svg></button>
    <button aria-label="WhatsApp"><svg width="30" height="30" viewBox="0 0 30 30"><path d="M2 28l2-7a13 13 0 1 1 5 5z" fill="none" stroke="#2fd366" stroke-width="2.500"/><path d="M10 8c-3 2-2 6 2 10s8 5 10 2c0-2-3-4-4-3l-2 1c-2-1-3-3-4-5l1-2c0-1-2-4-3-3z" fill="#2fd366"/></svg></button>
  </div>
  <div class="tray">
    <svg width="14" height="10" viewBox="0 0 14 10"><path d="M1 8l6-6l6 6" fill="none" stroke="#fff" stroke-width="2"/></svg>
    <svg width="20" height="14" viewBox="0 0 20 14"><path d="M0 9a5 5 0 0 1 5-6a6 6 0 0 1 11 2a4 4 0 0 1 4 5z" fill="#a9a9a9"/><path d="M4 13a4 4 0 0 1-3-5q7 3 11-2l8 4a3 3 0 0 1-3 3z" fill="#fff"/></svg>
    <span>ENG</span>
    <div class="status-icons">
      <svg width="20" height="16" viewBox="0 0 20 16" fill="none" stroke="#fff" stroke-width="1.600"><path d="M1 6C6 0 14 0 19 6M4 9c4-4 8-4 12 0M7 12c2-2 4-2 6 0"/><circle cx="10" cy="14" r="1" fill="#fff"/></svg>
      <svg width="20" height="18" viewBox="0 0 20 18" fill="none" stroke="#fff" stroke-width="1.500"><path d="M1 6h3l5-4v14l-5-4H1zM12 6c1 2 1 4 0 6M14 4c3 3 3 7 0 10M17 2c4 5 4 9 0 14"/></svg>
      <svg width="20" height="14" viewBox="0 0 20 14"><rect x="1" y="1" width="16" height="12" rx="3" fill="none" stroke="#fff" stroke-width="1.500"/><path d="M3 3h4v8H3zM18 5h2v4h-2z" fill="#fff"/></svg>
    </div>
    <time>6:22 PM<br>01/25/2025</time>
  </div>
</div>

<div class="watermark"><span lang="ar">مستقل</span><b>mostaql.com</b></div>

</body>
</html>
```

FILE: styles.css
```css
* {
  box-sizing: border-box;
}
body {
  margin: 0;
  min-height: 100vh;
  display: flex;
  flex-direction: column;
  position: relative;
  font-family: "Open Sans", "Noto Sans", sans-serif;
  font-size: 14px;
  color: #252423;
  background: #f3f2f1;
}
button, input {
  font: inherit;
  color: inherit;
  border: 0;
  padding: 0;
  background: none;
}
a {
  color: inherit;
  text-decoration: none;
}
h2, h3, h4, p, ul {
  margin: 0;
  padding: 0;
  font-size: inherit;
  font-weight: 400;
}
svg {
  display: block;
  overflow: visible;
  flex-shrink: 0;
}
.sprite {
  position: absolute;
  width: 0;
  height: 0;
}

/* title bar */
.titlebar {
  height: 43px;
  background: #3b3a39;
  color: #fff;
  display: grid;
  grid-template-columns: 7fr 500px 5fr;
  grid-template-areas: "name search window";
  align-items: center;
}
.quick {
  grid-area: name;
  display: flex;
  gap: 18px;
  padding-left: 20px;
}
.file-name {
  grid-area: name;
  justify-self: start;
  margin-left: 126px;
  padding-top: 4px;
  display: flex;
  align-items: center;
  gap: 8px;
  white-space: nowrap;
}
.file-name svg {
  margin-left: 2px;
}
.top-search {
  grid-area: search;
  height: 30px;
  display: flex;
  align-items: center;
  gap: 12px;
  padding-left: 20px;
  border-radius: 2px;
  background: #d6d5d3;
  color: #3b3a39;
  font-size: 16px;
}
.top-search input {
  flex: 1;
  outline: 0;
}
.top-search input::placeholder {
  color: #1b6b5c;
  opacity: 1;
}
.window {
  grid-area: window;
  display: flex;
  justify-content: flex-end;
  align-items: center;
  gap: 41px;
  padding-right: 20px;
}
.sign-in {
  display: flex;
  align-items: center;
  gap: 12px;
}

/* ribbon */
.ribbon {
  height: 157px;
  background: #fafafa;
  position: relative;
  z-index: 1;
  box-shadow: 0 1px 6px rgba(0, 0, 0, .25);
}
.tabs {
  height: 41px;
  display: flex;
  align-items: flex-start;
  gap: 39px;
  padding: 0 7px 0 28px;
  font-size: 17px;
}
.tabs a {
  height: 38px;
  line-height: 38px;
}
.tabs a.active {
  margin-left: 7px;
  font-size: 16px;
  font-weight: 600;
  border-bottom: 3px solid #117865;
}
.share {
  margin-left: auto;
  margin-top: 5px;
  height: 30px;
  width: 105px;
  display: flex;
  align-items: center;
  justify-content: center;
  gap: 9px;
  border-radius: 4px;
  background: #117865;
  color: #fff;
  font-size: 14px;
}
.share svg:last-child {
  margin-left: -5px;
}
.groups {
  display: flex;
  position: relative;
  padding-top: 4px;
}
.group {
  height: 111px;
  border-right: 1px solid #d2d0ce;
  display: flex;
  flex-direction: column;
}
.group p {
  margin-top: auto;
  text-align: center;
  font-size: 12px;
  line-height: 14px;
}
.tools {
  display: grid;
  align-items: start;
  padding-top: 6px;
}
.tool {
  display: block;
  line-height: 20px;
  white-space: nowrap;
  text-align: center;
  width: 100%;
}
.tool > svg:first-child {
  margin: 0 auto 3px;
}
.dd {
  display: inline-block;
  margin-left: 2px;
}
.clipboard {
  width: 201px;
}
.clipboard .tools {
  height: 90px;
  grid-template-columns: 70px 1fr;
}
.small-tools {
  margin-top: -6px;
}
.small-tools button {
  display: flex;
  align-items: center;
  gap: 5px;
  height: 30px;
  margin-left: -5px;
}
.group button:disabled {
  color: #c2c0be;
}
.data {
  width: 459px;
}
.data .tools {
  grid-template-columns: 60px 60px 86px 48px 52px 68px 68px;
  padding-left: 5px;
}
.queries {
  width: 145px;
}
.queries .tools {
  grid-template-columns: 68px 56px;
  padding-left: 11px;
}
.insert {
  width: 184px;
}
.insert .tools {
  grid-template-columns: 48px 52px 60px;
  padding-left: 11px;
}
.calculations {
  width: 233px;
}
.calculations .tools {
  grid-template-columns: 90px 62px 60px;
  padding-left: 9px;
}
.sensitivity {
  width: 92px;
}
.publish, .copilot {
  width: 73px;
}
.collapse {
  margin-left: auto;
  padding: 0 6px 5px;
  align-self: flex-end;
}

/* workspace */
.workspace {
  flex: 1;
  display: grid;
  grid-template-columns: 51px 1fr 226px 226px;
}
.rail {
  border-right: 1px solid #dcdbd9;
}
.rail button {
  width: 100%;
  height: 50px;
  display: grid;
  place-items: center;
}
.rail .active {
  box-shadow: inset 3px 0 #117865;
}
.center {
  display: flex;
  flex-direction: column;
}
.stage {
  flex: 1;
  display: flex;
  background: #fff;
}
.canvas {
  flex: 1;
  padding: 0 31px 8px 33px;
  display: flex;
}
.sheet {
  flex: 1;
  border: 2px dotted #484644;
  border-top: 0;
  padding: 15px 14px 5px 11px;
  display: flex;
}
.visual {
  flex: 1;
  position: relative;
  border: 4px solid #a80010;
  border-radius: 15px;
  background: #d7ccee;
  padding: 9px 10px 0;
  font-family: "DejaVu Sans Condensed", "DejaVu Sans", sans-serif;
}
.visual-tools {
  position: absolute;
  top: -4px;
  right: -4px;
  display: flex;
  gap: 5px;
}
.visual-tools button {
  width: 30px;
  height: 29px;
  background: #fff;
  display: grid;
  place-items: center;
}
.levels-head, .tree {
  display: grid;
  grid-template-columns: repeat(6, 1fr);
  column-gap: 51px;
  padding: 0 17px 0 25px;
}
.levels-head {
  height: 59px;
  background: #ac95dc;
}
.head {
  position: relative;
  display: grid;
  grid-template-columns: 1fr auto;
  align-content: start;
  padding-top: 7px;
}
.lock {
  position: absolute;
  left: -17px;
  top: 14px;
}
.head h3, .head button {
  height: 26px;
  line-height: 24px;
  border-bottom: 3px solid #12239e;
}
.head h3 {
  font-size: 19px;
  font-weight: 700;
  color: #12239e;
}
.head button {
  padding-top: 7px;
}
.head button svg {
  stroke: #b5b0a8;
  stroke-width: 1.5;
}
.head p {
  font-size: 14px;
  line-height: 22px;
  font-weight: 700;
  color: #a80010;
}
.tree {
  position: relative;
  height: 636px;
}
.links {
  position: absolute;
  left: 25px;
  top: 0;
  width: calc(100% - 42px);
  height: 636px;
  fill: none;
  stroke: #12239e;
  stroke-width: 1;
}
.links .on {
  stroke-width: 2;
}
.level {
  list-style: none;
  position: relative;
}
.root { padding-top: 280px; }
.country { padding-top: 178px; }
.city { padding-top: 42px; }
.house { padding-top: 212px; }
.breadwinner { padding-top: 246px; }
.name { padding-top: 33px; }
.level li {
  height: 68px;
  white-space: nowrap;
}
.bar {
  display: block;
  height: 11px;
  margin-bottom: 1px;
  background: #ececec;
}
.bar b {
  display: block;
  height: 100%;
  background: #118dff;
}
.level span, .level strong {
  display: block;
  padding-left: 5px;
  line-height: 18px;
}
.level span {
  font-size: 15px;
  font-weight: 700;
  color: #a80010;
}
.level span[lang="ar"] {
  font-family: "DejaVu Sans", sans-serif;
  font-size: 16px;
}
.level strong {
  font-size: 19px;
  color: #0d1776;
}

.filters {
  width: 42px;
  border-left: 1px solid #a19f9d;
  display: flex;
  flex-direction: column;
  align-items: center;
  padding-top: 16px;
}
.filters > svg {
  margin: 19px 0 10px 8px;
}
.filters h2 {
  writing-mode: vertical-rl;
  font-size: 17px;
  line-height: 20px;
  font-weight: 600;
}

/* page tabs */
.pages {
  height: 44px;
  display: flex;
  padding-left: 13px;
}
.layout {
  width: 30px;
  height: 38px;
  margin-right: 25px;
  display: grid;
  place-items: center;
}
.layout.active {
  border-bottom: 3px solid #117865;
}
.step {
  width: 28px;
}
.step svg {
  margin: 0 auto;
}
.layout + .step {
  margin-left: -19px;
}
.page-tab {
  width: 96px;
  background: #fff;
  border-left: 1px solid #b3b1af;
  position: relative;
}
.page-tab.active {
  font-weight: 500;
  box-shadow: inset 0 -5px #117865;
}
.page-tab span {
  position: absolute;
  right: 6px;
  top: 2px;
}
.add-page {
  width: 49px;
  background: #117865;
  display: grid;
  place-items: center;
}

/* panes */
.pane {
  border-left: 1px solid #dcdbd9;
  min-width: 0;
}
.pane > header {
  display: flex;
  justify-content: space-between;
  align-items: center;
  height: 50px;
  padding: 0 10px;
}
.pane h2 {
  font-size: 17px;
  font-weight: 600;
}
.visualizations h3 {
  padding-left: 10px;
  line-height: 16px;
}
.modes {
  display: flex;
  gap: 43px;
  padding: 6px 10px;
}
.modes button {
  width: 40px;
  height: 40px;
  display: grid;
  place-items: center;
  border-radius: 2px;
}
.modes .active {
  background: #d2d0ce;
}
.pointer {
  position: relative;
  margin-left: 20px;
}
.gallery {
  margin-top: -1px;
  border-top: 1px solid #8a8886;
  padding: 14px 0 0 14px;
  display: grid;
  grid-template-columns: repeat(6, 24px);
  gap: 11px;
}
.gallery button, .gallery svg {
  width: 24px;
  height: 24px;
}
.gallery .k, .gallery .w, .gallery .g, .gallery .b {
  fill: none;
  stroke: #3b3a39;
  stroke-width: 1.4;
}
.gallery .w {
  fill: #fff;
  stroke: #797775;
}
.gallery .g {
  fill: #c8c6c4;
  stroke: #797775;
}
.gallery .b {
  fill: #83beec;
  stroke: #1068bf;
}
.gallery .dark {
  stroke: #3b3a39;
}
.gallery .blue {
  stroke: #1068bf;
}
.gallery .hole {
  fill: #fff;
}
.gallery text {
  font-size: 10px;
  fill: #1c87d6;
}
.gallery .letter {
  font-size: 19px;
  line-height: 22px;
  font-weight: 700;
  text-align: left;
  color: #1c87d6;
}
.more-visuals {
  display: block;
  margin: 16px 0 22px 15px;
}
.wells {
  border-top: 1px solid #dcdbd9;
  padding: 12px 7px 0 5px;
}
.wells h4 {
  padding-left: 10px;
  line-height: 24px;
}
.wells .drill {
  font-weight: 500;
  margin-bottom: 2px;
}
.well {
  height: 34px;
  line-height: 32px;
  margin: 5px 0 12px;
  padding-left: 11px;
  white-space: nowrap;
  border: 1px dashed #c8c6c4;
  border-radius: 2px;
  background: #fff;
}
.option {
  display: flex;
  align-items: center;
  justify-content: space-between;
  height: 34px;
  padding: 0 20px 0 10px;
}
.switch {
  display: grid;
  grid-template: 20px / 40px;
  align-items: center;
}
.switch input, .switch em {
  grid-area: 1 / 1;
}
.switch em {
  position: relative;
  padding-left: 18px;
  font-style: normal;
  font-size: 11px;
  color: #605e5c;
}
.switch input {
  appearance: none;
  margin: 0;
  height: 20px;
  border: 1px solid #8a8886;
  border-radius: 10px;
  background: #fff;
  display: flex;
  align-items: center;
  padding: 0 5px;
}
.switch input::before {
  content: "";
  width: 10px;
  height: 10px;
  border-radius: 50%;
  background: #605e5c;
}
.switch input:checked {
  background: #117865;
  border-color: #117865;
  justify-content: flex-end;
}
.switch input:checked::before {
  background: #fff;
}
.switch input:checked + em {
  padding-left: 5px;
  color: #fff;
}

.fields {
  padding-right: 4px;
}
.fields header {
  padding: 0 6px 0 10px;
}
.field-search {
  height: 30px;
  margin: 8px 0 10px 5px;
  display: flex;
  align-items: center;
  gap: 10px;
  padding-left: 15px;
  border: 1px solid #d2d0ce;
  border-bottom-color: #605e5c;
  border-radius: 4px;
  background: #fff;
  color: #605e5c;
  font-size: 16px;
}
.field-search input {
  width: 100%;
  outline: 0;
}
.field-search input::placeholder {
  color: #605e5c;
  opacity: 1;
}
.field-list {
  height: 682px;
  overflow: hidden;
  position: relative;
}
.field-list label, .table-name {
  height: 30px;
  display: flex;
  align-items: center;
  padding-left: 55px;
  white-space: nowrap;
  color: #323130;
}
.field-list label svg {
  width: 16px;
  height: 18px;
  margin: 0 7px 0 10px;
}
.field-list label input {
  appearance: none;
  width: 15px;
  height: 15px;
  margin: 0;
  border: 1px solid #8a8886;
  border-radius: 2px;
  flex-shrink: 0;
}
.field-list .table-name {
  padding-left: 17px;
  gap: 6px;
}
.scrollbar {
  position: absolute;
  top: 0;
  right: 0;
  width: 10px;
  height: 620px;
  background: #c8c6c4;
}

/* status bar */
.statusbar {
  height: 30px;
  border-top: 1px solid #dcdbd9;
  border-bottom: 1px solid #000;
  display: flex;
  align-items: center;
  justify-content: space-between;
  padding: 3px 22px 0 5px;
  color: #484644;
}
.zoom {
  display: flex;
  align-items: center;
  color: #605e5c;
}
.zoom button {
  font-size: 18px;
  line-height: 20px;
}
.zoom span {
  margin: 0 24px 0 16px;
}
.zoom input {
  appearance: none;
  width: 125px;
  height: 13px;
  margin: 0 6px;
  background: linear-gradient(#605e5c, #605e5c) center / 100% 1px no-repeat, linear-gradient(#605e5c, #605e5c) 50% 50% / 1px 7px no-repeat;
}
.zoom input::-webkit-slider-thumb {
  appearance: none;
  width: 5px;
  height: 13px;
  background: #605e5c;
}

/* taskbar */
.taskbar {
  height: 60px;
  background: linear-gradient(90deg, #1b282a, #222323 45%, #222323 60%, #1b282a 80%);
  border-top: 1px solid #444;
  color: #fff;
  display: flex;
  justify-content: space-between;
}
.apps {
  display: flex;
  align-items: center;
  padding-left: 13px;
}
.apps button {
  position: relative;
  width: 55px;
  height: 50px;
  display: grid;
  place-items: center;
}
.apps .task-search {
  width: 123px;
  height: 38px;
  margin: 0 5px 0 6px;
  display: flex;
  align-items: center;
  justify-content: center;
  gap: 7px;
  border-radius: 19px;
  background: #f4f5f5;
  color: #201f1e;
}
.running::after {
  content: "";
  position: absolute;
  bottom: 1px;
  width: 8px;
  height: 4px;
  border-radius: 2px;
  background: #9c9c9c;
}
.apps .current {
  width: 51px;
  margin: 0 2px;
  border-radius: 5px;
  background: #2e3435;
}
.current::after {
  width: 20px;
  background: #7cbdf0;
}
.tray {
  display: flex;
  align-items: center;
  gap: 23px;
  padding: 0 24px 2px 0;
}
.status-icons {
  display: flex;
  align-items: center;
  gap: 10px;
}
.tray time {
  text-align: right;
  line-height: 20px;
}

/* site mark laid over the lower part of the screen */
.watermark {
  position: absolute;
  left: 44%;
  bottom: 20px;
  width: 230px;
  display: flex;
  flex-direction: column;
  align-items: center;
  pointer-events: none;
  z-index: 2;
}
.watermark span {
  font: 700 64px/76px "DejaVu Sans", sans-serif;
  color: #8c8c8c;
  -webkit-text-stroke: 3px #8c8c8c;
  opacity: .2;
}
.watermark b {
  font: 700 37px/42px "Liberation Sans", Arial, sans-serif;
  color: rgba(150, 150, 150, .6);
}
```
